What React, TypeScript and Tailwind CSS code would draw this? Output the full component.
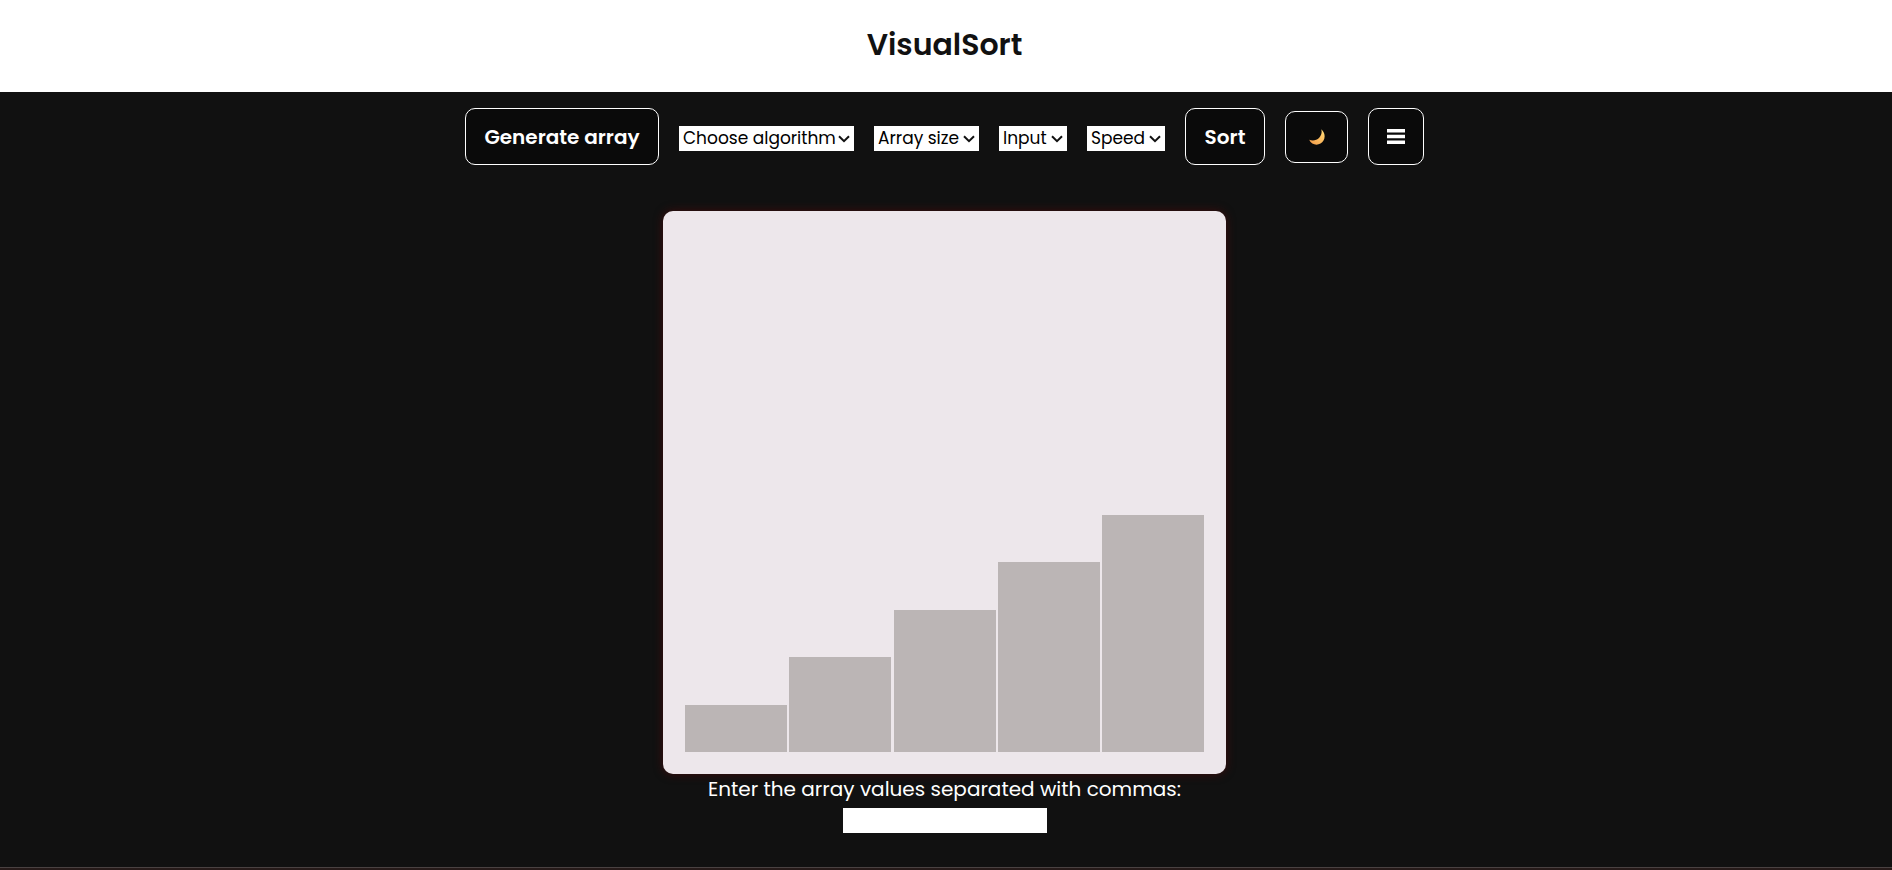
import { useState } from 'react';

const bars = [
  { value: 1, height: 'h-[47px]' },
  { value: 2, height: 'h-[95px]' },
  { value: 3, height: 'h-[142px]' },
  { value: 4, height: 'h-[190px]' },
  { value: 5, height: 'h-[237px]' },
];

const buttonBase =
  'flex items-center justify-center rounded-[10px] border border-white bg-[#0a0a0a] text-white';

type PickerProps = { label: string; options: string[]; width: string };

function Picker({ label, options, width }: PickerProps) {
  return (
    <div className={`relative mt-[3px] flex h-[25px] ${width}`}>
      <select
        aria-label={label}
        className="h-full w-full appearance-none bg-white pl-1 text-[17px] leading-[25px] text-black"
      >
        <option>{label}</option>
        {options.map((o) => (
          <option key={o}>{o}</option>
        ))}
      </select>
      <svg
        className="pointer-events-none absolute top-[9px] right-1 h-2 w-3"
        viewBox="0 0 12 8"
        fill="none"
        stroke="#111"
        strokeWidth="2"
      >
        <path d="M1 1.2 6 6.2 11 1.2" />
      </svg>
    </div>
  );
}

export default function App() {
  const [values, setValues] = useState('');
  return (
    <div className="flex min-h-screen flex-col bg-[#111111] font-[Poppins,Inter,sans-serif]">
      <header className="flex h-[92px] items-center justify-center bg-white pr-[3px] pb-[2px]">
        <h1 className="text-[30px] leading-9 font-semibold text-[#111]">VisualSort</h1>
      </header>
      <nav className="flex items-center justify-center gap-5 pt-4 pr-[3px]">
        <button className={`${buttonBase} h-[57px] w-[194px] text-[20px] font-semibold`}>
          Generate array
        </button>
        <Picker label="Choose algorithm" options={['Bubble sort', 'Merge sort']} width="w-[175px]" />
        <Picker label="Array size" options={['5', '10']} width="w-[105px]" />
        <Picker label="Input" options={['Random', 'Manual']} width="w-[68px]" />
        <Picker label="Speed" options={['Slow', 'Fast']} width="w-[78px]" />
        <button className={`${buttonBase} h-[57px] w-[80px] text-[20px] font-semibold`}>Sort</button>
        <button aria-label="Dark mode" className={`${buttonBase} h-[52px] w-[63px]`}>
          <svg className="h-4 w-4" viewBox="0 0 16 16">
            <defs>
              <linearGradient id="moon" x1="0" y1="1" x2="1" y2="0">
                <stop offset="0" stopColor="#f29a4a" />
                <stop offset="0.6" stopColor="#fdc163" />
                <stop offset="1" stopColor="#ffdf7c" />
              </linearGradient>
            </defs>
            <path
              d="M12.2 0.2C15.6 2.8 16.7 7.8 14.5 11.6 11.6 16.8 3.2 17.4 0.2 10.8 3.4 12.3 7.6 11.6 10.2 8.8 12.5 6.3 13.2 3.1 12.2 0.2Z"
              fill="url(#moon)"
            />
          </svg>
        </button>
        <button aria-label="Menu" className={`${buttonBase} h-[57px] w-[56px]`}>
          <svg className="h-[15px] w-[18px]" viewBox="0 0 18 15" fill="#fff">
            <path d="M0 0h18v3.4H0zM0 5.8h18v3.4H0zM0 11.6h18v3.4H0z" />
          </svg>
        </button>
      </nav>
      <main className="flex flex-col items-center pt-[46px] pr-[3px]">
        <div className="flex h-[563px] w-[563px] items-end justify-between rounded-[10px] bg-[#ede7eb] p-[22px] shadow-[0_0_10px_#3d0c0c]">
          {bars.map((b) => (
            <div key={b.value} className={`w-[102px] bg-[#bbb5b5] ${b.height}`} />
          ))}
        </div>
        <label htmlFor="values" className="text-[20px] leading-[30px] text-white">
          Enter the array values separated with commas:
        </label>
        <input
          id="values"
          value={values}
          onChange={(e) => setValues(e.target.value)}
          className="mt-1 h-[25px] w-[204px] bg-white px-1 text-base text-black"
        />
      </main>
      <footer className="mt-[34px] h-[3px] border-t border-[#4a4242] bg-[#261a19]" />
    </div>
  );
}
